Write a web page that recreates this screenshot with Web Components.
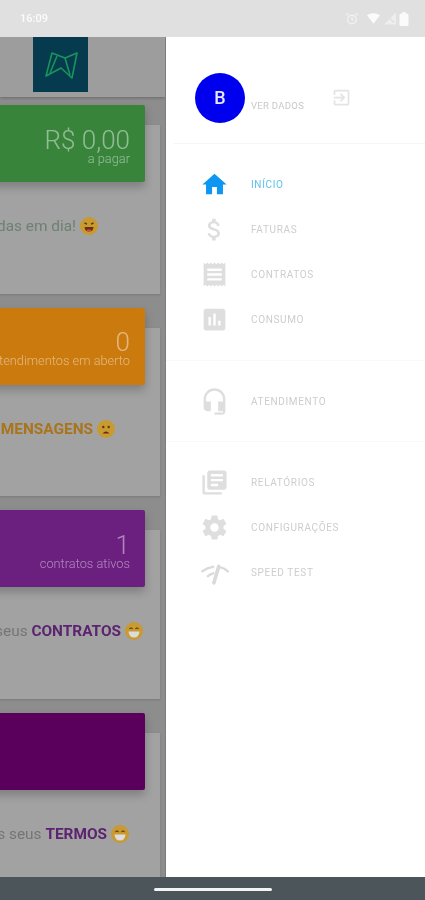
<!DOCTYPE html>
<html lang="pt-BR">
<head>
<meta charset="utf-8">
<title>Menu</title>
<style>
  html, body { margin: 0; padding: 0; background: #fff; }
  body { width: 425px; height: 900px; overflow: hidden; font-family: Roboto, "Liberation Sans", sans-serif; }
  #app { display: flex; flex-direction: column; height: 900px; filter: blur(.6px); }
  #middle { display: flex; height: 840px; }
</style>
</head>
<body>
<div id="app">
  <status-bar time="16:09"></status-bar>
  <div id="middle">
    <dimmed-page>
      <page-card color="#38843b" value="R$ 0,00" caption="a pagar" ink="#6d8270" tint="#6c7f6c" emoji="tongue">
        Suas contas estão todas em dia!
      </page-card>
      <page-card color="#cb7a0e" value="0" caption="atendimentos em aberto" tint="#a9741a" emoji="sad" inset="45">
        Sem novas <b>MENSAGENS</b>
      </page-card>
      <page-card color="#6b1f7f" value="1" caption="contratos ativos" tint="#5c2370" emoji="grin" inset="17">
        Confira aqui os seus <b>CONTRATOS</b>
      </page-card>
      <page-card color="#5a005c" tint="#5c2370" emoji="grin" inset="31">
        Confira também os seus <b>TERMOS</b>
      </page-card>
    </dimmed-page>
    <app-drawer>
      <drawer-section>
        <drawer-item icon="home" active>INÍCIO</drawer-item>
        <drawer-item icon="money">FATURAS</drawer-item>
        <drawer-item icon="receipt">CONTRATOS</drawer-item>
        <drawer-item icon="chart">CONSUMO</drawer-item>
      </drawer-section>
      <drawer-section>
        <drawer-item icon="headset">ATENDIMENTO</drawer-item>
      </drawer-section>
      <drawer-section last>
        <drawer-item icon="books">RELATÓRIOS</drawer-item>
        <drawer-item icon="gear">CONFIGURAÇÕES</drawer-item>
        <drawer-item icon="speed">SPEED TEST</drawer-item>
      </drawer-section>
    </app-drawer>
  </div>
  <nav-bar></nav-bar>
</div>

<script>
// Material style glyphs, all on a 24 unit grid
const ICONS = {
  home: '<path d="M10 20v-6h4v6h5v-8h3L12 3 2 12h3v8z"/>',
  money: '<path d="M11.8 10.9c-2.27-.59-3-1.2-3-2.15 0-1.09 1.01-1.85 2.7-1.85 1.78 0 2.44.85 2.5 2.1h2.21c-.07-1.72-1.12-3.3-3.21-3.81V3h-3v2.16c-1.94.42-3.5 1.68-3.5 3.61 0 2.31 1.91 3.46 4.7 4.13 2.5.6 3 1.48 3 2.41 0 .69-.49 1.79-2.7 1.79-2.06 0-2.87-.92-2.98-2.1h-2.2c.12 2.19 1.76 3.42 3.68 3.83V21h3v-2.15c1.95-.37 3.5-1.5 3.5-3.55 0-2.84-2.43-3.81-4.7-4.4z"/>',
  receipt: '<path d="M18 17H6v-2h12v2zm0-4H6v-2h12v2zm0-4H6V7h12v2zM3 22l1.5-1.5L6 22l1.5-1.5L9 22l1.5-1.5L12 22l1.5-1.5L15 22l1.5-1.5L18 22l1.5-1.5L21 22V2l-1.5 1.5L18 2l-1.5 1.5L15 2l-1.5 1.5L12 2l-1.5 1.5L9 2 7.5 3.5 6 2 4.5 3.5 3 2v20z"/>',
  chart: '<path d="M19 3H5c-1.1 0-2 .9-2 2v14c0 1.1.9 2 2 2h14c1.1 0 2-.9 2-2V5c0-1.1-.9-2-2-2zM9 17H7v-7h2v7zm4 0h-2V7h2v10zm4 0h-2v-4h2v4z"/>',
  headset: '<path d="M12 1c-4.97 0-9 4.03-9 9v7c0 1.66 1.34 3 3 3h3v-8H5v-2c0-3.87 3.13-7 7-7s7 3.13 7 7v2h-4v8h4v1h-7v2h6c1.66 0 3-1.34 3-3V10c0-4.97-4.03-9-9-9z"/>',
  books: '<path d="M4 6H2v14c0 1.1.9 2 2 2h14v-2H4V6zm16-4H8c-1.1 0-2 .9-2 2v12c0 1.1.9 2 2 2h12c1.1 0 2-.9 2-2V4c0-1.1-.9-2-2-2zm-1 9H9V9h10v2zm-4 4H9v-2h6v2zm4-8H9V5h10v2z"/>',
  gear: '<path d="M19.43 12.98c.04-.32.07-.64.07-.98s-.03-.66-.07-.98l2.11-1.65c.19-.15.24-.42.12-.64l-2-3.46c-.12-.22-.39-.3-.61-.22l-2.49 1c-.52-.4-1.08-.73-1.69-.98l-.38-2.65C14.46 2.18 14.25 2 14 2h-4c-.25 0-.46.18-.49.42l-.38 2.65c-.61.25-1.17.59-1.69.98l-2.49-1c-.23-.09-.49 0-.61.22l-2 3.46c-.13.22-.07.49.12.64l2.11 1.65c-.04.32-.07.65-.07.98s.03.66.07.98l-2.11 1.65c-.19.15-.24.42-.12.64l2 3.46c.12.22.39.3.61.22l2.49-1c.52.4 1.08.73 1.69.98l.38 2.65c.03.24.24.42.49.42h4c.25 0 .46-.18.49-.42l.38-2.65c.61-.25 1.17-.59 1.69-.98l2.49 1c.23.09.49 0 .61-.22l2-3.46c.12-.22.07-.49-.12-.64l-2.11-1.65zM12 15.5c-1.93 0-3.5-1.57-3.5-3.5s1.57-3.5 3.5-3.5 3.5 1.57 3.5 3.5-1.57 3.5-3.5 3.5z"/>',
  speed: '<g fill="none" stroke="#dadada" stroke-linecap="round"><path stroke-width="2" d="M2 11Q6 8 10.800 7.300M17 7.800Q20.500 8.500 23 11M6.500 15Q8.800 13.200 11 12.700"/><path stroke-width="3" d="M11.500 20.500L15.500 7"/></g>',
  exit: '<path d="M10.090 15.590L11.500 17l5-5-5-5-1.410 1.410L12.670 11H3v2h9.670l-2.580 2.590zM19 3H5c-1.110 0-2 .9-2 2v4h2V5h14v14H5v-4H3v4c0 1.100.89 2 2 2h14c1.100 0 2-.9 2-2V5c0-1.100-.9-2-2-2z"/>'
};

class StatusBar extends HTMLElement {
  constructor() {
    super();
    this.attachShadow({ mode: 'open' }).innerHTML = `
      <style>
        :host { display: flex; align-items: center; justify-content: space-between; height: 37px; flex: none;
                background: #e0e0e0; color: #fbfbfb; padding: 0 16px 0 20px; box-sizing: border-box; font-size: 11px; font-weight: 500; }
        .icons { display: flex; align-items: center; gap: 3px; }
      </style>
      <span>${this.getAttribute('time')}</span>
      <span class="icons">
        <svg width="14" height="14" viewBox="0 0 14 14" fill="none" stroke="#f1f1f1" stroke-width="1.400">
          <circle cx="7" cy="7.500" r="4.300"/><path d="M7 5v2.500l1.500 1M1.500 3L3.500 1.300M12.500 3l-2-1.700"/>
        </svg>
        <svg width="13" height="11" viewBox="0 0 16 13" fill="#fbfbfb" style="margin-left:5px"><path d="M0 2.500C4.500-.8 11.500-.8 16 2.500L8 13z"/></svg>
        <svg width="12" height="13" viewBox="0 0 13 13" fill="#f1f1f1" style="margin-left:1px"><path d="M13 0v13H0z" opacity=".8"/><path d="M2 2l9 9" stroke="#e0e0e0" stroke-width="1.500"/></svg>
        <svg width="10" height="14" viewBox="0 0 9 14" fill="#fbfbfb"><path d="M3 0h3v1.500h1.500q1.500 0 1.500 1.500v9.500q0 1.500-1.500 1.500h-6Q0 14 0 12.500V3q0-1.500 1.500-1.500H3z"/></svg>
      </span>`;
  }
}

class NavBar extends HTMLElement {
  constructor() {
    super();
    this.attachShadow({ mode: 'open' }).innerHTML = `
      <style>
        :host { display: flex; align-items: center; justify-content: center; height: 23px; flex: none; background: #4b555a; }
        div { width: 118px; height: 3px; margin-top: 1px; background: #f4f4f4; border-radius: 2px; }
      </style>
      <div></div>`;
  }
}

class DimmedPage extends HTMLElement {
  constructor() {
    super();
    this.attachShadow({ mode: 'open' }).innerHTML = `
      <style>
        :host { display: flex; flex-direction: column; width: 166px; flex: none; overflow: hidden; background: #8d8d8d; box-sizing: border-box; border-right: 1px solid #7d7d7d; }
        .top { display: flex; justify-content: flex-end; height: 60px; flex: none; box-sizing: border-box; padding-right: 77px;
               background: #9d9d9d; box-shadow: 0 1px 3px rgba(0,0,0,.25); }
        .logo { display: block; width: 55px; height: 55px; background: #063a4e; }
        .cards { display: flex; flex-direction: column; align-items: flex-end; gap: 34px; padding: 28px 5px 0 0; }
      </style>
      <div class="top">
        <svg class="logo" viewBox="0 0 55 55" fill="none" stroke="#17955a" stroke-width="1.600" stroke-linejoin="round">
          <path d="M19 16L13 39 28 31 39 41 44 16 32 21z"/>
          <path d="M24 19L17 36M32 21L37 38"/>
        </svg>
      </div>
      <div class="cards"><slot></slot></div>`;
  }
}

const FACES = {
  tongue: '<path d="M4.500 6l2.500 1.200M13.500 6L11 7.200" stroke="#5a3a10" stroke-width="1.400" fill="none"/><path d="M4.500 10h9q-.5 4.500-4.500 4.500T4.500 10z" fill="#6b2d12"/><path d="M7 12.500h4v1.500q-2 1.500-4 0z" fill="#c9504a"/>',
  sad: '<circle cx="6.300" cy="7" r="1.200" fill="#5a3a10"/><circle cx="11.700" cy="7" r="1.200" fill="#5a3a10"/><path d="M5.500 13.500Q9 9.500 12.500 13.500z" fill="#6b2d12"/>',
  grin: '<path d="M4.500 7q1.500-2 3 0M10.500 7q1.500-2 3 0" stroke="#5a3a10" stroke-width="1.200" fill="none"/><path d="M3.500 9.500h11q-.5 6-5.500 6t-5.500-6z" fill="#dcdcdc"/>'
};

class PageCard extends HTMLElement {
  constructor() {
    super();
    const value = this.getAttribute('value');
    const caption = this.getAttribute('caption');
    const face = FACES[this.getAttribute('emoji')];
    this.attachShadow({ mode: 'open' }).innerHTML = `
      <style>
        :host { display: block; position: relative; width: 300px; height: 168.6px; flex: none; background: #a2a2a2; box-shadow: 0 1px 2px rgba(0,0,0,.15); }
        .banner { position: absolute; top: -20px; left: -30px; right: 15px; height: 77px; box-sizing: border-box; padding: 5px 15px 0 0;
                  display: flex; flex-direction: column; justify-content: center; align-items: flex-end;
                  background: ${this.getAttribute('color')}; border-radius: 2px; box-shadow: 0 5px 10px rgba(0,0,0,.22); color: rgba(255,255,255,.46); }
        .value { font-size: 26px; font-weight: 300; line-height: 24px; }
        .caption { font-size: 12.8px; font-weight: 300; line-height: 13px; white-space: nowrap; }
        .msg { display: flex; justify-content: flex-end; align-items: center; gap: 4px; height: 100%; box-sizing: border-box;
               padding: 34px ${this.getAttribute('inset') || 62}px 0 0; font-size: 15.4px; color: ${this.getAttribute('ink') || '#757575'}; white-space: nowrap; }
        ::slotted(b) { color: ${this.getAttribute('tint')}; font-weight: 700; }
        svg { flex: none; }
      </style>
      <div class="banner">
        ${value ? `<div class="value">${value}</div><div class="caption">${caption}</div>` : ''}
      </div>
      <div class="msg">
        <span><slot></slot></span>
        <svg width="18" height="18" viewBox="0 0 18 18"><circle cx="9" cy="9" r="9" fill="#c99a30"/>${face}</svg>
      </div>`;
  }
}

class AppDrawer extends HTMLElement {
  constructor() {
    super();
    this.attachShadow({ mode: 'open' }).innerHTML = `
      <style>
        :host { display: block; flex: 1; min-width: 0; background: #fff; overflow: hidden; }
        .head { display: flex; align-items: center; height: 107px; margin-left: 7px; box-sizing: border-box; padding: 15px 0 0 22px; border-bottom: 1px solid #f6f6f6; }
        .avatar { width: 50px; height: 50px; border-radius: 50%; background: #0000ee; color: #e8e8f8; flex: none;
                  display: flex; align-items: center; justify-content: center; font-size: 18px; font-weight: 500; }
        .link { font-size: 9.500px; letter-spacing: .3px; color: #c8c8c8; margin: 15px 0 0 6px; width: 80px; white-space: nowrap; }
        svg { width: 21px; height: 21px; fill: #e4e4e4; display: block; }
      </style>
      <div class="head">
        <div class="avatar">B</div>
        <div class="link">VER DADOS</div>
        <svg viewBox="0 0 24 24">${ICONS.exit}</svg>
      </div>
      <slot></slot>`;
  }
}

class DrawerSection extends HTMLElement {
  constructor() {
    super();
    const border = this.hasAttribute('last') ? 'none' : '1px solid #f8f8f8';
    this.attachShadow({ mode: 'open' }).innerHTML = `
      <style>
        :host { display: flex; flex-direction: column; box-sizing: border-box; padding: 18px 0 17.500px; border-bottom: ${border}; }
      </style>
      <slot></slot>`;
  }
}

class DrawerItem extends HTMLElement {
  constructor() {
    super();
    const active = this.hasAttribute('active');
    this.attachShadow({ mode: 'open' }).innerHTML = `
      <style>
        :host { display: flex; align-items: center; height: 45px; padding-left: 34px; gap: 22px; font-size: 10px; letter-spacing: .65px;
                color: ${active ? '#5cc0ea' : '#cdcdcd'}; white-space: nowrap; }
        svg { width: 29px; height: 29px; flex: none; fill: ${active ? '#0d96f2' : '#dedede'}; }
      </style>
      <svg viewBox="0 0 24 24">${ICONS[this.getAttribute('icon')]}</svg>
      <span><slot></slot></span>`;
  }
}

customElements.define('status-bar', StatusBar);
customElements.define('nav-bar', NavBar);
customElements.define('dimmed-page', DimmedPage);
customElements.define('page-card', PageCard);
customElements.define('app-drawer', AppDrawer);
customElements.define('drawer-section', DrawerSection);
customElements.define('drawer-item', DrawerItem);
</script>
</body>
</html>
